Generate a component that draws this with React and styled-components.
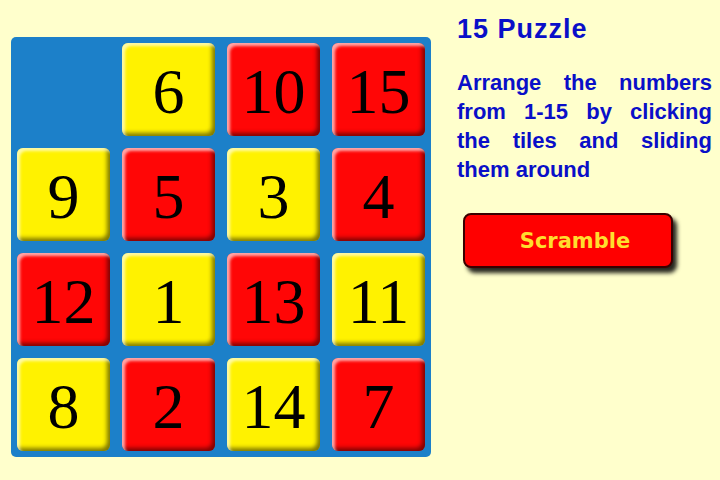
import React from 'react';
import styled, { createGlobalStyle } from 'styled-components';

const GlobalStyle = createGlobalStyle`
  html, body {
    margin: 0;
    padding: 0;
    background-color: #ffffcc;
  }
`;

const Page = styled.div`
  display: flex;
  align-items: flex-start;
  width: 720px;
  height: 480px;
  background-color: #ffffcc;
`;

const Board = styled.div`
  display: grid;
  grid-template-columns: repeat(4, 93px);
  grid-auto-rows: 93px;
  gap: 12px;
  padding: 6px;
  margin: 37px 0 0 11px;
  background-color: #1c80c9;
  border-radius: 5px;
`;

const Tile = styled.div`
  display: flex;
  align-items: center;
  justify-content: center;
  padding-top: 4px;
  box-sizing: border-box;
  border-radius: 6px;
  background-color: ${(p) => (p.$yellow ? '#fff200' : '#ff0606')};
  box-shadow:
    inset 3px 3px 3px rgba(255, 255, 255, 0.65),
    inset -3px -3px 4px rgba(0, 0, 0, 0.5);
  font-family: 'Liberation Serif', 'Times New Roman', serif;
  font-size: 64px;
  line-height: 1;
  color: #000;
  cursor: pointer;
  user-select: none;
`;

const Blank = styled.div``;

const Side = styled.div`
  display: flex;
  flex-direction: column;
  width: 255px;
  margin-left: 26px;
  padding-top: 13px;
`;

const Title = styled.h1`
  margin: 0;
  font-family: 'Liberation Sans', Arial, sans-serif;
  font-weight: bold;
  font-size: 27px;
  letter-spacing: 1px;
  line-height: 32px;
  color: #0a0fc8;
`;

const Blurb = styled.p`
  margin: 23px 0 0 0;
  font-family: 'Liberation Sans', Arial, sans-serif;
  font-weight: bold;
  font-size: 22px;
  line-height: 29px;
  text-align: justify;
  color: #0a0fc8;
`;

const ScrambleButton = styled.button`
  margin: 29px 0 0 6px;
  width: 210px;
  height: 55px;
  padding: 0 0 0 14px;
  border: 2px solid #3a0000;
  border-radius: 8px;
  background-color: #ff0000;
  box-shadow: 4px 5px 4px rgba(0, 0, 0, 0.85);
  font-family: 'DejaVu Sans', Verdana, sans-serif;
  font-weight: bold;
  font-size: 21px;
  color: #ffde2e;
  cursor: pointer;
`;

const layout = [
  [0, 6, 10, 15],
  [9, 5, 3, 4],
  [12, 1, 13, 11],
  [8, 2, 14, 7],
];

// checkerboard by solved position
const isYellow = (n) => {
  const r = Math.floor((n - 1) / 4);
  const c = (n - 1) % 4;
  return (r + c) % 2 === 0;
};

const App = () => {
  return (
    <Page>
      <GlobalStyle />
      <Board>
        {layout.flat().map((n, i) =>
          n === 0 ? (
            <Blank key={i} />
          ) : (
            <Tile key={i} $yellow={isYellow(n)}>
              {n}
            </Tile>
          )
        )}
      </Board>
      <Side>
        <Title>15 Puzzle</Title>
        <Blurb>
          Arrange the numbers from 1-15 by clicking the tiles and sliding them around
        </Blurb>
        <ScrambleButton>Scramble</ScrambleButton>
      </Side>
    </Page>
  );
};

export default App;
